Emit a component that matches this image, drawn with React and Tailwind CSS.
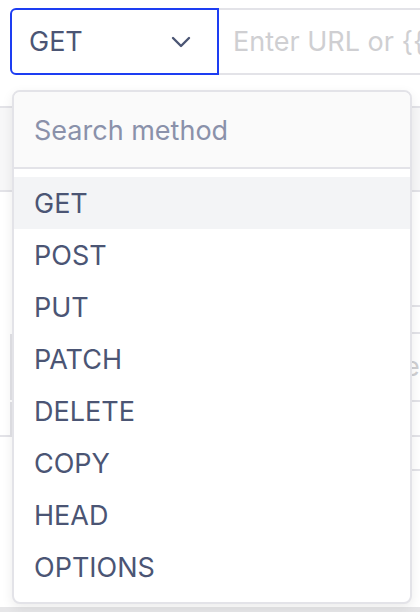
import React from "react";

const methods = ["GET", "POST", "PUT", "PATCH", "DELETE", "COPY", "HEAD", "OPTIONS"];

export default function App() {
  return (
    <div
      className="relative w-[420px] h-[612px] overflow-hidden bg-white"
      style={{ fontFamily: "Inter, 'Liberation Sans', sans-serif" }}
    >
      {/* Request bar */}
      <div className="flex pt-2 pl-[10px]">
        <div className="flex items-center justify-between w-[209px] h-[67px] border-2 border-[#1d3df2] rounded-l-[6px] pl-[17px] pr-[26px]">
          <span className="text-[27px] text-[#4b5574] pt-[2px]">GET</span>
          <svg width="20" height="12" viewBox="0 0 20 12" fill="none">
            <path d="M2 2l8 8 8-8" stroke="#4b5574" strokeWidth="2.4" strokeLinecap="round" strokeLinejoin="round" />
          </svg>
        </div>
        <div className="flex-1 flex items-center h-[67px] border-y-2 border-[#e3e3e8] pl-[14px] whitespace-nowrap overflow-hidden">
          <span className="text-[27px] text-[#cfcfd2] pt-[2px]">Enter URL or {"{{"}</span>
        </div>
      </div>

      {/* Background content (mostly hidden) */}
      <div className="mt-[31px] h-[86px] bg-[#f7f7f8] border-y-2 border-[#e3e3e8]" />
      <div className="h-[113px]" />
      <div className="flex flex-col">
        <div className="h-[2px] bg-[#e3e3e8] ml-[400px]" />
        <div className="h-[25px]" />
        <div className="h-[2px] bg-[#e3e3e8] ml-[400px]" />
        <div className="flex items-center h-[66px]">
          <div className="ml-[10px] w-[3px] h-[66px] bg-[#e3e3e8]" />
          <span className="ml-auto mr-[-10px] text-[27px] text-[#cfcfd2]">er</span>
        </div>
        <div className="h-[2px] bg-[#e3e3e8] ml-[400px]" />
        <div className="flex h-[33px]"><div className="ml-[10px] w-[3px] h-full bg-[#e3e3e8]" /></div>
        <div className="h-[2px] bg-[#e3e3e8]" />
        <div className="h-[32px]" />
        <div className="h-[2px] bg-[#e3e3e8] ml-[400px]" />
      </div>
      <div className="absolute left-0 right-0 bottom-0 h-[5px] bg-[#e6e6e8]" />

      {/* Dropdown */}
      <div className="absolute left-[12px] top-[90px] w-[400px] h-[514px] bg-white border-2 border-[#e3e3e8] rounded-[8px] shadow-[0_4px_12px_rgba(0,0,0,0.08)] overflow-hidden flex flex-col">
        <div className="h-[77px] bg-[#fafafa] border-b-2 border-[#e3e3e8] flex items-center pl-[20px] pt-[3px]">
          <span className="text-[27px] text-[#8a91aa]">Search method</span>
        </div>
        <div className="pt-2 flex flex-col">
          {methods.map((m, i) => (
            <div
              key={m}
              className={`h-[52px] flex items-center pl-[20px] pt-[3px] ${i === 0 ? "bg-[#f3f4f6]" : ""}`}
            >
              <span className="text-[27px] text-[#4b5574]">{m}</span>
            </div>
          ))}
        </div>
      </div>
    </div>
  );
}
